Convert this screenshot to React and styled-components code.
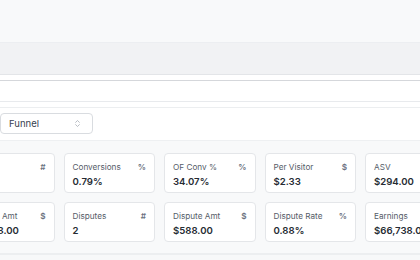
import styled, { createGlobalStyle } from "styled-components";
import { ChevronsUpDown } from "lucide-react";

const GlobalStyle = createGlobalStyle`
  body {
    margin: 0;
    background: #ffffff;
    font-family: Inter, "Liberation Sans", sans-serif;
    overflow: hidden;
  }
`;

const Page = styled.div`
  width: 420px;
  height: 260px;
  overflow: hidden;
`;

const TopBar = styled.div`
  height: 42px;
  background: #f8f9fa;
  border-bottom: 1px solid #eceef1;
`;

const SubBar = styled.div`
  height: 31px;
  background: #f1f2f4;
  border-bottom: 1px solid #e3e5e8;
`;

const Toolbar = styled.div`
  margin-top: 5px;
  height: 20px;
  border-top: 1px solid #d5d7db;
  border-bottom: 1px solid #e8eaed;
`;

const FilterRow = styled.div`
  margin-top: 5px;
  border-top: 1px solid #eceef0;
  padding: 5px 0 6px;
`;

const Select = styled.div`
  width: 93px;
  height: 21px;
  box-sizing: border-box;
  border: 1px solid #d9dce0;
  border-radius: 4px;
  background: #fff;
  display: flex;
  align-items: center;
  justify-content: space-between;
  padding: 0 10px 0 8px;
  font-size: 9.5px;
  color: #374151;
  svg {
    color: #a3a8b0;
  }
`;

const CardsSection = styled.div`
  background: #f8f9fa;
  border-top: 1px solid #eef0f2;
  padding: 12px 0 11px;
`;

const Grid = styled.div`
  margin-left: -37px;
  display: grid;
  grid-template-columns: repeat(6, 91.5px);
  grid-auto-rows: 40px;
  column-gap: 9px;
  row-gap: 9px;
`;

const Card = styled.div`
  box-sizing: border-box;
  background: #fff;
  border: 1px solid #e4e6e9;
  border-radius: 4px;
  padding: 8px 8px 0;
`;

const CardHead = styled.div`
  display: flex;
  justify-content: space-between;
  align-items: center;
  font-size: 8.2px;
  line-height: 11px;
  color: #555c68;
`;

const Unit = styled.span`
  font-weight: 600;
  color: #6b7280;
`;

const Value = styled.div`
  margin-top: 2px;
  font-size: 9.6px;
  line-height: 13px;
  font-weight: 600;
  color: #262b33;
  white-space: nowrap;
`;

const TableHead = styled.div`
  height: 8px;
  border-top: 2px solid #eceef0;
  background: #f7f8f9;
`;

const metrics = [
  { label: "Sales", unit: "#", value: "12" },
  { label: "Conversions", unit: "%", value: "0.79%" },
  { label: "OF Conv %", unit: "%", value: "34.07%" },
  { label: "Per Visitor", unit: "$", value: "$2.33" },
  { label: "ASV", unit: "", value: "$294.00" },
  { label: "", unit: "", value: "" },
  { label: "Refund Amt", unit: "$", value: "$1,588.00" },
  { label: "Disputes", unit: "#", value: "2" },
  { label: "Dispute Amt", unit: "$", value: "$588.00" },
  { label: "Dispute Rate", unit: "%", value: "0.88%" },
  { label: "Earnings", unit: "", value: "$66,738.00" },
  { label: "", unit: "", value: "" },
];

export default function App() {
  return (
    <Page>
      <GlobalStyle />
      <TopBar />
      <SubBar />
      <Toolbar />
      <FilterRow>
        <Select>
          <span>Funnel</span>
          <ChevronsUpDown size={9} strokeWidth={2} />
        </Select>
      </FilterRow>
      <CardsSection>
        <Grid>
          {metrics.map((m, i) => (
            <Card key={i}>
              <CardHead>
                <span>{m.label}</span>
                <Unit>{m.unit}</Unit>
              </CardHead>
              <Value>{m.value}</Value>
            </Card>
          ))}
        </Grid>
      </CardsSection>
      <TableHead />
    </Page>
  );
}
